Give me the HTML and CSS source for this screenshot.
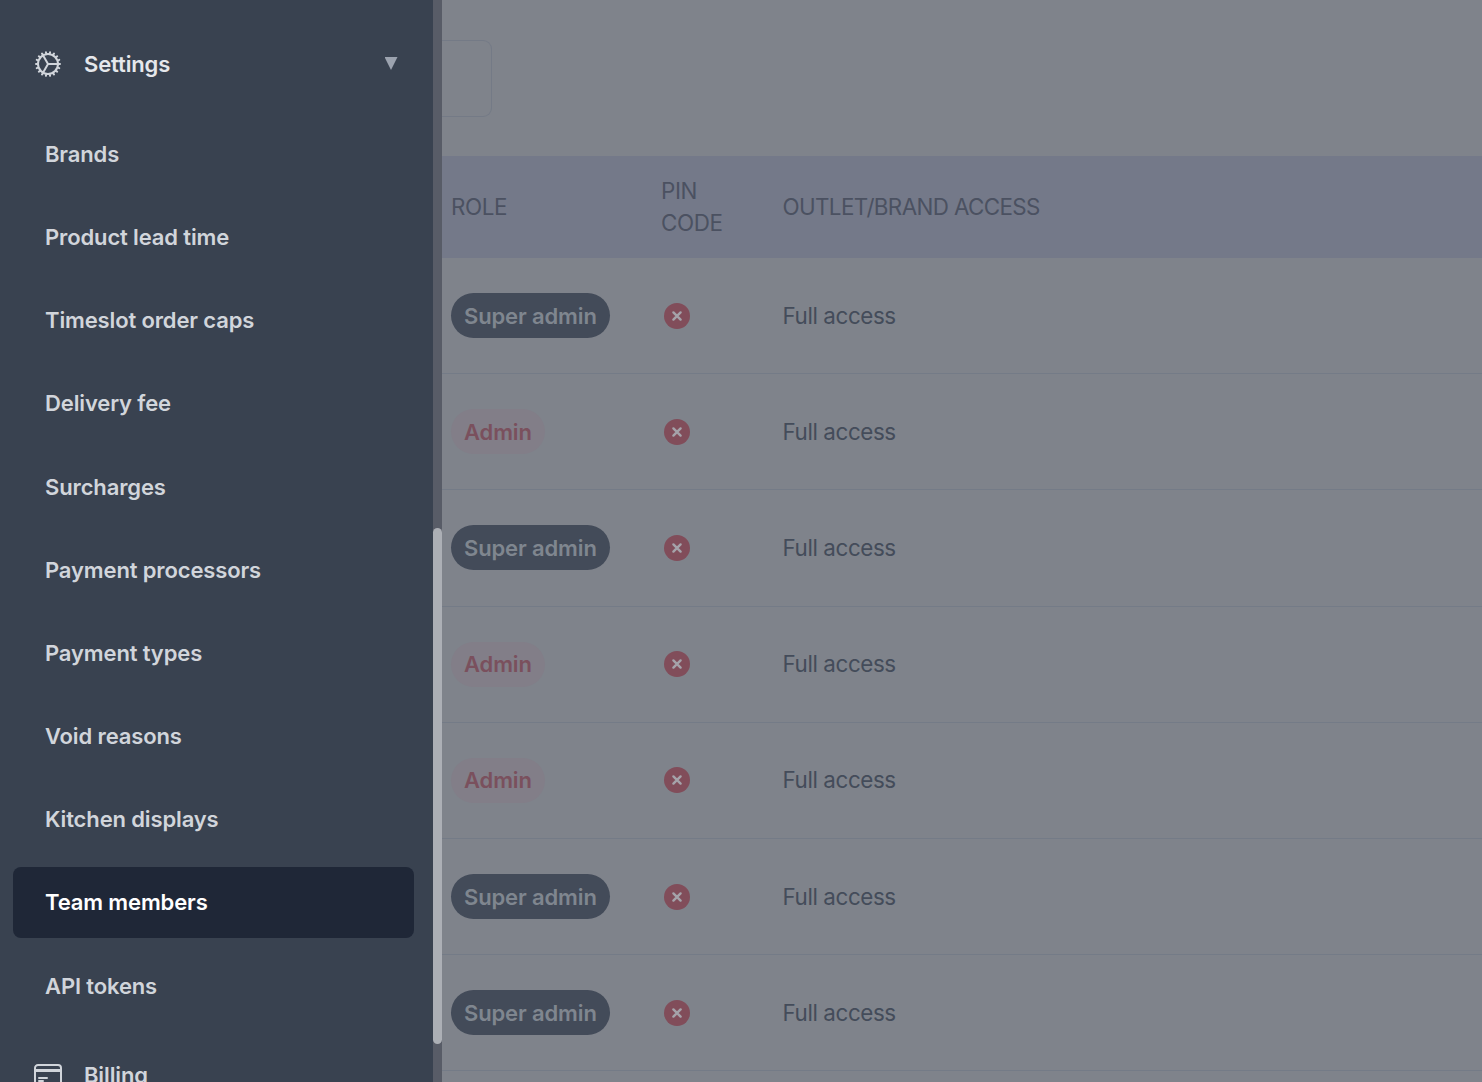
FILE: index.html
```
<!DOCTYPE html>
<html lang="en">
<head>
  <meta charset="UTF-8">
  <title>Team members</title>
  <meta name="viewport" content="width=device-width, initial-scale=1.0">
  <link rel="stylesheet" href="styles.css">
</head>
<body>

  <!-- shared icon for the pin code column -->
  <svg class="sprite">
    <symbol id="x-circle" viewBox="0 0 24 24">
      <circle cx="12" cy="12" r="9.75" fill="#814d5a"/>
      <path d="M9.3 9.3l5.4 5.4m0-5.4l-5.4 5.4" fill="none" stroke="#a5a3aa" stroke-width="1.8" stroke-linecap="round"/>
    </symbol>
  </svg>

  <div class="sidebar">
    <div class="nav-group">
      <svg class="icon" viewBox="0 0 24 24"><path d="M4.5 12a7.5 7.5 0 0015 0m-15 0a7.5 7.5 0 1115 0m-15 0H3m16.5 0H21m-1.5 0H12m-8.457 3.077l1.41-.513m14.095-5.13l1.41-.513M5.106 17.785l1.15-.964m11.49-9.642l1.149-.964M7.501 19.795l.75-1.3m7.5-12.99l.75-1.3m-6.063 16.658l.26-1.477m2.605-14.772l.26-1.477m0 17.726l-.26-1.477M10.698 4.614l-.26-1.477M16.5 19.794l-.75-1.299M7.5 4.205L12 12m6.894 5.785l-1.149-.964M6.256 7.178l-1.15-.964m15.352 8.864l-1.41-.513M4.954 9.435l-1.41-.514M12.002 12l-3.75 6.495"/></svg>
      <span>Settings</span>
      <span class="arrow"></span>
    </div>
    <nav class="nav-list">
      <a>Brands</a>
      <a>Product lead time</a>
      <a>Timeslot order caps</a>
      <a>Delivery fee</a>
      <a>Surcharges</a>
      <a>Payment processors</a>
      <a>Payment types</a>
      <a>Void reasons</a>
      <a>Kitchen displays</a>
      <a class="active">Team members</a>
      <a>API tokens</a>
    </nav>
    <div class="nav-group billing">
      <svg class="icon" viewBox="0 0 24 24"><path d="M2.25 8.25h19.5M2.25 9h19.5m-16.5 5.25h6m-6 2.25h3m-3.75 3h15a2.25 2.25 0 002.25-2.25V6.75A2.25 2.25 0 0019.5 4.5h-15a2.25 2.25 0 00-2.25 2.25v10.5A2.25 2.25 0 004.5 19.5z"/></svg>
      <span>Billing</span>
    </div>
  </div>

  <div class="scrollbar"><div class="thumb"></div></div>

  <div class="main">
    <div class="filter-box"></div>
    <div class="row header">
      <div>ROLE</div>
      <div class="pin-title">PIN CODE</div>
      <div class="access-title">OUTLET/BRAND ACCESS</div>
    </div>
    <div class="row">
      <div><span class="badge super">Super admin</span></div>
      <div><svg class="no-pin"><use href="#x-circle"/></svg></div>
      <div class="access">Full access</div>
    </div>
    <div class="row">
      <div><span class="badge admin">Admin</span></div>
      <div><svg class="no-pin"><use href="#x-circle"/></svg></div>
      <div class="access">Full access</div>
    </div>
    <div class="row">
      <div><span class="badge super">Super admin</span></div>
      <div><svg class="no-pin"><use href="#x-circle"/></svg></div>
      <div class="access">Full access</div>
    </div>
    <div class="row">
      <div><span class="badge admin">Admin</span></div>
      <div><svg class="no-pin"><use href="#x-circle"/></svg></div>
      <div class="access">Full access</div>
    </div>
    <div class="row">
      <div><span class="badge admin">Admin</span></div>
      <div><svg class="no-pin"><use href="#x-circle"/></svg></div>
      <div class="access">Full access</div>
    </div>
    <div class="row">
      <div><span class="badge super">Super admin</span></div>
      <div><svg class="no-pin"><use href="#x-circle"/></svg></div>
      <div class="access">Full access</div>
    </div>
    <div class="row">
      <div><span class="badge super">Super admin</span></div>
      <div><svg class="no-pin"><use href="#x-circle"/></svg></div>
      <div class="access">Full access</div>
    </div>
  </div>

</body>
</html>
```
FILE: styles.css
```
* {
  box-sizing: border-box;
}
body {
  margin: 0;
  height: 1082px;
  display: flex;
  overflow: hidden;
  font-family: Inter, "Liberation Sans", sans-serif;
  font-size: 22.4px;
  line-height: 32px;
  background-color: #7f838b;
}
.sprite {
  display: none;
}
.sidebar {
  width: 433px;
  flex-shrink: 0;
  padding: 29px 19px 0 13px;
  background-color: #394250;
  color: #d1d5db;
  font-size: 22px;
  font-weight: 600;
  letter-spacing: -0.13px;
}
.nav-group {
  display: flex;
  align-items: center;
  height: 70px;
  padding: 0 16.5px 0 19px;
  color: #e5e7eb;
}
.icon {
  width: 32px;
  height: 32px;
  margin-right: 20px;
  fill: none;
  stroke: #d1d5db;
  stroke-width: 1.5;
  stroke-linecap: round;
  stroke-linejoin: round;
}
.arrow {
  width: 13px;
  height: 13px;
  margin-left: auto;
  margin-bottom: 1px;
  background-color: #9ca3af;
  clip-path: polygon(0 0, 100% 0, 50% 100%);
}
.nav-list {
  display: flex;
  flex-direction: column;
  gap: 12.8px;
  margin-top: 19.75px;
}
.nav-list a {
  height: 70.4px;
  padding: 19px 32px;
  border-radius: 8px;
}
.nav-list .active {
  background-color: #1f2737;
  color: #fff;
}
.billing {
  margin-top: 19.25px;
  color: #d1d5db;
}
.scrollbar {
  width: 9px;
  flex-shrink: 0;
  padding-top: 528px;
  background-color: #585c67;
}
.thumb {
  height: 516px;
  border-radius: 5px;
  background-color: #acafb5;
}
.main {
  flex: 1;
  padding-top: 40px;
  color: #444c5a;
  letter-spacing: -0.4px;
}
.filter-box {
  width: 50px;
  height: 77px;
  margin-bottom: 39px;
  border: 1px solid #747a86;
  border-left: none;
  border-radius: 0 9px 9px 0;
}
.row {
  display: grid;
  grid-template-columns: 210px 121.5px 1fr;
  align-items: center;
  height: 116.2px;
  padding-left: 9px;
  border-bottom: 1px solid #747b87;
}
.header {
  height: 102px;
  border-bottom: none;
  background-color: #747989;
  color: #4b5161;
}
.pin-title {
  width: 80px;
}
.access-title {
  letter-spacing: -0.63px;
}
.badge {
  display: inline-block;
  padding: 6.5px 13px 6px;
  height: 45px;
  border-radius: 23px;
  font-size: 22px;
  font-weight: 600;
  letter-spacing: -0.13px;
  vertical-align: middle;
}
.super {
  background-color: #434b59;
  color: #7f868f;
}
.admin {
  background-color: #827e88;
  color: #7a505d;
}
.no-pin {
  display: block;
  width: 32px;
  height: 32px;
}
```
